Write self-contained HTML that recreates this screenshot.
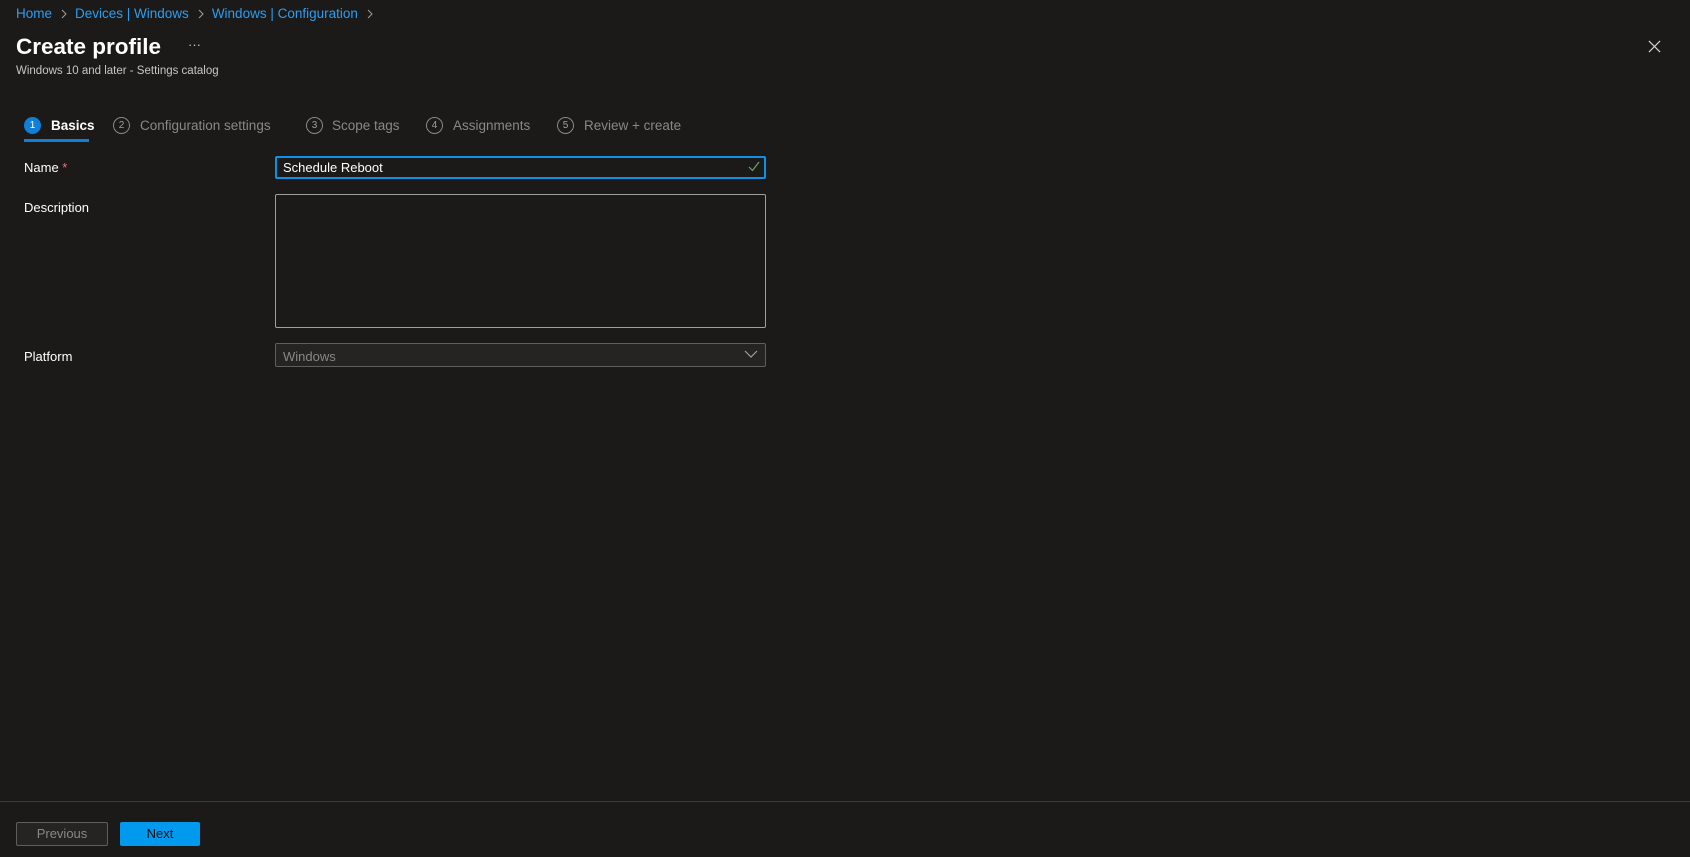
<!DOCTYPE html>
<html><head><meta charset="utf-8"><style>
*{box-sizing:border-box;margin:0;padding:0}
body{width:1690px;height:857px;background:#1b1a19;font-family:"Liberation Sans",sans-serif;color:#fff;position:relative;overflow:hidden;font-size:13px}
.a{position:absolute;white-space:nowrap}
.bc{color:#2e9cf0;font-size:13.5px;top:6px;left:16px}
.bc svg{margin:0 8px 0 9px;vertical-align:-1px}
.step{top:118px;font-size:13.5px;color:#8a8886}
.circ{position:absolute;top:117px;width:17px;height:17px;border:1px solid #8a8886;border-radius:50%;font-size:10px;color:#a19f9d;text-align:center;line-height:15px}
.lbl{font-size:13px;color:#fff;left:24px}
.box{position:absolute;left:275px;width:491px;border:1px solid #a19f9d;border-radius:2px}
</style></head><body>
<div class="a bc">Home<svg width="6" height="10" viewBox="0 0 6 10"><path d="M1 1L5 5L1 9" stroke="#a19f9d" fill="none"/></svg>Devices | Windows<svg width="6" height="10" viewBox="0 0 6 10"><path d="M1 1L5 5L1 9" stroke="#a19f9d" fill="none"/></svg>Windows | Configuration<svg width="6" height="10" viewBox="0 0 6 10"><path d="M1 1L5 5L1 9" stroke="#a19f9d" fill="none"/></svg></div>
<div class="a" style="top:34px;left:16px;font-size:22.5px;font-weight:bold;color:#fff">Create profile</div>
<div class="a" style="top:37px;left:188px;font-size:13px;color:#c8c6c4">···</div>
<div class="a" style="top:65px;left:16px;font-size:11.5px;color:#c8c6c4">Windows 10 and later - Settings catalog</div>
<svg class="a" style="left:1648px;top:40px" width="13" height="13" viewBox="0 0 14 14"><path d="M1 1L13 13M13 1L1 13" stroke="#d2d0ce" stroke-width="1.3"/></svg>

<div class="circ" style="left:24px;background:#0f7fd8;border-color:#0f7fd8;color:#fff">1</div>
<div class="a step" style="left:51px;color:#fff;font-weight:bold">Basics</div>
<div class="a" style="left:24px;top:139px;width:65px;height:3px;background:#0f7fd8"></div>
<div class="circ" style="left:113px">2</div>
<div class="a step" style="left:140px">Configuration settings</div>
<div class="circ" style="left:306px">3</div>
<div class="a step" style="left:332px">Scope tags</div>
<div class="circ" style="left:426px">4</div>
<div class="a step" style="left:453px">Assignments</div>
<div class="circ" style="left:557px">5</div>
<div class="a step" style="left:584px">Review + create</div>

<div class="a lbl" style="top:160px">Name <span style="color:#f1707b">*</span></div>
<div class="box" style="top:156px;height:23px;border:2px solid #0f8fe8"></div>
<div class="a" style="left:283px;top:160px;font-size:13px">Schedule Reboot</div>
<svg class="a" style="left:748px;top:161px" width="12" height="11" viewBox="0 0 12 11"><path d="M1 6L4.5 9.5L11 1" stroke="#6ba66b" stroke-width="1.2" fill="none"/></svg>

<div class="a lbl" style="top:200px">Description</div>
<div class="box" style="top:194px;height:134px"></div>

<div class="a lbl" style="top:349px">Platform</div>
<div class="box" style="top:343px;height:24px;background:#252423;border-color:#605e5c"></div>
<div class="a" style="left:283px;top:349px;color:#8a8886">Windows</div>
<svg class="a" style="left:744px;top:350px" width="14" height="9" viewBox="0 0 14 9"><path d="M1 1L7 7L13 1" stroke="#a19f9d" stroke-width="1.2" fill="none"/></svg>

<div class="a" style="left:0;top:801px;width:1690px;height:1px;background:#3b3a39"></div>
<div class="a" style="left:16px;top:822px;width:92px;height:24px;border:1px solid #605e5c;background:#252423;border-radius:2px;color:#8a8886;text-align:center;line-height:22px">Previous</div>
<div class="a" style="left:120px;top:822px;width:80px;height:24px;background:#0099ee;border-radius:2px;color:#111;text-align:center;line-height:24px">Next</div>
</body></html>
